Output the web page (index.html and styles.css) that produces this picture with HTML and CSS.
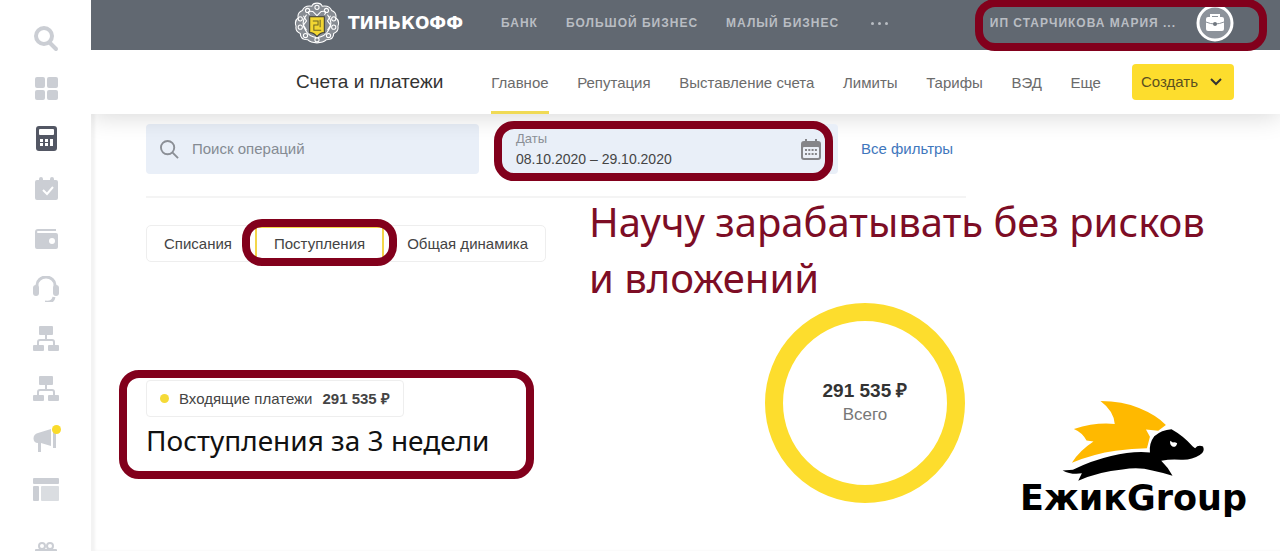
FILE: index.html
```
<!DOCTYPE html>
<html lang="ru">
	<head>
		<meta charset="UTF-8">
		<title>Счета и платежи</title>
		<link rel="stylesheet" href="styles.css">
	</head>
	<body>
		<!-- боковое меню -->
		<aside class="sidebar">
			<a href="#" aria-label="Поиск"><svg viewBox="0 0 26 26"><circle cx="11" cy="10" r="8" fill="none" stroke="currentColor" stroke-width="4"/><path d="M17 17l6 6" stroke="currentColor" stroke-width="4" stroke-linecap="round"/></svg></a>
			<a href="#" aria-label="Главная"><svg viewBox="0 0 26 26"><rect x="2" y="1" width="10" height="11" rx="2"/><rect x="14" y="1" width="11" height="11" rx="2"/><rect x="2" y="14" width="10" height="10" rx="2"/><rect x="14" y="14" width="11" height="10" rx="2"/></svg></a>
			<a href="#" class="active" aria-label="Счета"><svg viewBox="0 0 26 26"><rect x="3" y="0" width="21" height="25" rx="3"/><g fill="#fff"><rect x="6" y="3" width="15" height="6" rx="1"/><rect x="7" y="13" width="3" height="3"/><rect x="12" y="13" width="3" height="3"/><rect x="7" y="17" width="3" height="3"/><rect x="12" y="17" width="3" height="3"/><rect x="17" y="13" width="3" height="7"/></g></svg></a>
			<a href="#" aria-label="Календарь"><svg viewBox="0 0 26 26"><path d="M4 4h2V3a2 2 0 0 1 4 0v1h7V3a2 2 0 0 1 4 0v1h2a2 2 0 0 1 2 2v16a2 2 0 0 1-2 2H4a2 2 0 0 1-2-2V6a2 2 0 0 1 2-2z"/><path d="M10 14l4 4 6-7" fill="none" stroke="#fff" stroke-width="2"/></svg></a>
			<a href="#" aria-label="Кошелёк"><svg viewBox="0 0 26 26"><path d="M23 3H5a3 3 0 0 0-3 3v15a2 2 0 0 0 2 2h19a2 2 0 0 0 2-2V9a2 2 0 0 0-2-2H5a1 1 0 0 1 0-2h18z"/><circle cx="19" cy="15" r="3" fill="#fff"/></svg></a>
			<a href="#" aria-label="Поддержка"><svg viewBox="0 0 26 26"><path d="M4 13V9a9 8 0 0 1 18 0v4" fill="none" stroke="currentColor" stroke-width="3"/><rect x="0" y="9" width="6" height="11" rx="3"/><rect x="20" y="9" width="6" height="11" rx="3"/><path d="M12 26q8 1 9-5" fill="none" stroke="currentColor" stroke-width="3"/></svg></a>
			<a href="#" aria-label="Структура"><svg viewBox="0 0 26 26"><path d="M13 8v6M5 19v-3q0-2 2-2h12q2 0 2 2v3" fill="none" stroke="currentColor" stroke-width="2"/><rect x="6" y="0" width="14" height="9" rx="1"/><rect x="0" y="19" width="11" height="6" rx="1"/><rect x="15" y="19" width="11" height="6" rx="1"/></svg></a>
			<a href="#" aria-label="Партнёры"><svg viewBox="0 0 26 26"><path d="M13 8v6M5 19v-3q0-2 2-2h12q2 0 2 2v3" fill="none" stroke="currentColor" stroke-width="2"/><rect x="6" y="0" width="14" height="9" rx="1"/><rect x="0" y="19" width="11" height="6" rx="1"/><rect x="15" y="19" width="11" height="6" rx="1"/></svg></a>
			<a href="#" class="has-news" aria-label="Новости"><svg viewBox="0 0 26 26"><path d="M18 3v17L8 17v9H5v-9c-6 0-6-9 0-10z"/><rect x="20" y="4" width="3" height="18"/></svg></a>
			<a href="#" aria-label="Витрина"><svg viewBox="0 0 26 26"><rect x="0" y="2" width="26" height="6" rx="1"/><rect x="0" y="10" width="6" height="15" rx="1"/><rect x="8" y="10" width="18" height="15" rx="1" opacity=".7"/></svg></a>
			<a href="#" class="gift" aria-label="Подарки"><svg viewBox="0 0 26 26"><g fill="none" stroke="currentColor" stroke-width="2"><circle cx="9" cy="5" r="3"/><circle cx="17" cy="5" r="3"/></g><rect x="2" y="8" width="22" height="16" rx="1"/></svg></a>
		</aside>

		<div class="page">
			<!-- верхняя полоса -->
			<header class="topbar">
				<a href="#" class="logo">
					<svg viewBox="0 0 44 40">
						<path fill="#878c93" d="M22 1q4 0 5 3q7-1 9 4q5 2 4 7q4 3 2 8q1 5-4 7q0 6-7 6q-3 3-9 3q-6 0-9-3q-7 0-7-6q-5-2-4-7q-2-5 2-8q-1-5 4-7q2-5 9-4q1-3 5-3z"/>
						<g fill="none" stroke="#fff">
							<path d="M22 1q4 0 5 3q7-1 9 4q5 2 4 7q4 3 2 8q1 5-4 7q0 6-7 6q-3 3-9 3q-6 0-9-3q-7 0-7-6q-5-2-4-7q-2-5 2-8q-1-5 4-7q2-5 9-4q1-3 5-3z"/>
							<circle cx="22" cy="5" r="2"/><circle cx="13" cy="8" r="2"/><circle cx="31" cy="8" r="2"/><circle cx="6" cy="16" r="2"/><circle cx="38" cy="16" r="2"/><circle cx="6" cy="24" r="2"/><circle cx="38" cy="24" r="2"/><circle cx="11" cy="32" r="2"/><circle cx="33" cy="32" r="2"/><circle cx="22" cy="36" r="2"/>
							<path d="M12 12q-6 8-1 15q3 6 11 7q8-1 11-7q5-7-1-15M15 12q-4-4 3-3l4 4l4-4q7-1 3 3M9 13l3 5l-3 4l3 5M35 13l-3 5l3 4l-3 5"/>
						</g>
						<path d="M15 14h14v15q-4 0-7 4q-3-4-7-4z" fill="#f2d632" stroke="#3c3d38"/>
						<path d="M18 18h5v4h-4v5h7M25 17v7" fill="none" stroke="#6d6425"/>
					</svg>
					<span>ТИНЬКОФФ</span>
				</a>
				<nav class="top-nav">
					<a href="#">БАНК</a>
					<a href="#">БОЛЬШОЙ БИЗНЕС</a>
					<a href="#">МАЛЫЙ БИЗНЕС</a>
					<a href="#" class="dots" aria-label="Ещё"><i></i><i></i><i></i></a>
				</nav>
				<a href="#" class="user marked">
					<span>ИП СТАРЧИКОВА МАРИЯ ...</span>
					<svg viewBox="0 0 38 38"><circle cx="19" cy="19" r="17" fill="#8d939b" stroke="#fff" stroke-width="3"/><path d="M15 14v-3h8v3" fill="none" stroke="#fff" stroke-width="2"/><rect x="10" y="13" width="18" height="14" rx="2" fill="#fff"/><path d="M10 18q9 4 18 0" fill="none" stroke="#8d939b"/><circle cx="19" cy="20" r="2" fill="#70767f"/></svg>
				</a>
			</header>

			<!-- меню раздела -->
			<div class="subbar">
				<h1>Счета и платежи</h1>
				<nav class="sub-nav">
					<a href="#" class="current">Главное</a>
					<a href="#">Репутация</a>
					<a href="#">Выставление счета</a>
					<a href="#">Лимиты</a>
					<a href="#">Тарифы</a>
					<a href="#">ВЭД</a>
					<a href="#">Еще</a>
				</nav>
				<button type="button" class="create">Создать <svg viewBox="0 0 12 8"><path d="M1 1l5 5l5-5" fill="none" stroke="currentColor" stroke-width="2"/></svg></button>
			</div>

			<main>
				<form class="filters">
					<div class="field search">
						<svg viewBox="0 0 20 20"><circle cx="8" cy="8" r="7" fill="none" stroke="currentColor" stroke-width="2"/><path d="M13 13l6 6" stroke="currentColor" stroke-width="2"/></svg>
						<input type="text" placeholder="Поиск операций" aria-label="Поиск операций">
					</div>
					<div class="field dates marked">
						<div>
							<label for="dates">Даты</label>
							<input type="text" id="dates" value="08.10.2020 – 29.10.2020">
						</div>
						<svg viewBox="0 0 20 21"><path d="M3 2h1V0h2v2h8V0h2v2h1a3 3 0 0 1 3 3v13a3 3 0 0 1-3 3H3a3 3 0 0 1-3-3V5a3 3 0 0 1 3-3z"/><rect x="2" y="8" width="16" height="11" rx="1" fill="#ebeff7"/><path d="M4 11h12M4 15h12" stroke="currentColor" stroke-width="2" stroke-dasharray="2 1.3"/></svg>
					</div>
					<a href="#">Все фильтры</a>
				</form>

				<div class="content">
					<section class="left">
						<div class="tabs">
							<button type="button">Списания</button>
							<button type="button" class="on marked">Поступления</button>
							<button type="button">Общая динамика</button>
						</div>
						<div class="income marked">
							<div class="legend"><i></i><span>Входящие платежи</span><b>291 535 ₽</b></div>
							<p>Поступления за 3 недели</p>
						</div>
					</section>
					<section class="right">
						<p class="slogan">Научу зарабатывать без рисков<br>и вложений</p>
						<div class="bottom">
							<div class="donut"><b>291 535 ₽</b><span>Всего</span></div>
							<div class="brand">
								<svg viewBox="150 25 430 250">
									<path fill="#ffb900" d="M264 31Q330 31 380 52Q432 73 461 103L438 121L401 117L413 139L404 173Q360 173 310 181Q245 190 178 217Q200 181 243 153L222 150Q210 126 184 115Q250 94 307 100Q304 61 264 31z"/>
									<path d="M413 186Q410 158 426 137Q448 118 478 116Q514 136 542 168L549 173Q558 162 573 168Q580 184 563 194Q538 210 506 208Q477 205 447 211Q467 230 481 256Q450 246 420 240Q380 229 330 237Q260 243 197 271L208 249Q175 254 150 240L181 238Q240 210 296 197Q360 181 413 186z"/>
									<path fill="#fff" d="M474 151l8 5q6-2 13 2q-2 12-13 11q-10-4-8-18z"/>
								</svg>
								<span>ЕжикGroup</span>
							</div>
						</div>
					</section>
				</div>
			</main>
		</div>
	</body>
</html>
```
FILE: styles.css
```
* { margin:0; padding:0; box-sizing:border-box; }
body { display:flex; min-height:100vh; background:#fff; color:#444; font:15px/20px "Liberation Sans", Arial, sans-serif; overflow-x:hidden; }
a { color:inherit; text-decoration:none; }
button, input { font:inherit; color:inherit; border:0; background:none; }
svg { display:block; fill:currentColor; flex:none; }

/* боковое меню */
.sidebar { position:sticky; top:0; z-index:3; flex:none; width:91px; height:100vh; padding-top:14px; overflow:hidden; background:#fff; color:#cbced4; }
.sidebar a { display:flex; height:50px; align-items:center; justify-content:center; }
.sidebar svg { width:26px; height:26px; }
.sidebar .active { color:#535764; }
.sidebar .gift { padding-top:30px; }
.has-news { position:relative; }
.has-news::after { content:""; position:absolute; top:11px; right:30px; width:9px; height:9px; border-radius:50%; background:#fadb2b; }

.page { flex:1; min-width:0; box-shadow:inset 4px 0 3px #f3f3f3; }

/* красная рамка поверх элемента */
.marked { position:relative; }
.marked::after { content:""; position:absolute; z-index:2; border:8px solid #82001c; border-radius:20px; pointer-events:none; }

/* верхняя полоса */
.topbar { display:flex; align-items:center; height:50px; padding:0 46px 4px 203px; background:#616871; color:#b9bdc3; font-size:12px; font-weight:bold; letter-spacing:1px; }
.logo { display:flex; align-items:center; gap:8px; color:#fff; font:bold 17px/20px "DejaVu Sans", sans-serif; letter-spacing:0; }
.logo svg { width:46px; height:42px; }
.top-nav { display:flex; gap:28px; margin-left:38px; }
.dots { display:flex; align-items:center; gap:4px; margin-left:4px; }
.dots i { width:3px; height:3px; border-radius:50%; background:currentColor; }
.user { display:flex; align-items:center; gap:20px; margin-left:auto; }
.user svg { width:38px; height:38px; }
.user::after { inset:-5px -33px -9px -15px; }

/* меню раздела */
.subbar { position:relative; display:flex; align-items:center; height:64px; padding:0 46px 0 205px; background:#fff; box-shadow:0 2px 26px rgba(0,0,0,.16); clip-path:inset(0 0 -40px 0); }
.subbar h1 { font-size:19px; font-weight:normal; color:#333; }
.sub-nav { display:flex; flex:1; justify-content:space-between; align-self:stretch; margin:0 31px 0 48px; color:#6b6b6b; }
.sub-nav a { line-height:66px; }
.sub-nav .current { border-bottom:3px solid #f0da55; }
.create { display:flex; align-items:center; justify-content:space-between; width:102px; height:36px; padding:0 12px 0 9px; border-radius:4px; background:#fddd2d; color:#5b5020; font-size:15px; }
.create svg { width:12px; height:8px; color:#333; }

main { padding:10px 0 30px 55px; }
.filters { display:flex; align-items:center; max-width:820px; padding-bottom:22px; border-bottom:2px solid #f4f4f4; }
.field { display:flex; align-items:center; height:50px; border-radius:4px; background:#e9eff8; }
.field input { width:100%; outline:0; }
.search { flex:1; gap:13px; padding:0 14px; color:#8b8f96; }
.search svg { width:19px; height:19px; }
.search input::placeholder { color:#858b93; opacity:1; }
.dates { flex:1; justify-content:space-between; margin:0 23px 0 22px; padding:0 17px 0 15px; color:#444; }
.dates div { flex:1; padding-top:4px; }
.dates label { display:block; line-height:16px; font-size:13px; color:#8b8f96; }
.dates input { display:block; height:24px; font-size:14px; }
.dates svg { width:20px; height:21px; color:#858589; }
.dates::after { inset:-3px 5px -7px -7px; }
.filters > a { color:#3f77bd; width:105px; }

.content { display:flex; }
.left { flex:none; width:443px; padding-top:27px; }
.tabs { display:inline-flex; gap:6px; height:37px; border:1px solid #eee; border-radius:5px; }
.tabs button { padding:0 17px; }
.tabs .on { border:2px solid #f3d649; }
.tabs .on::after { inset:-9px -15px -7px -15px; }

.income { display:inline-block; margin-top:118px; }
.income::after { inset:-10px -45px -16px -27px; }
.legend { display:inline-flex; align-items:center; gap:10px; height:37px; padding:0 13px; border:1px solid #eee; border-radius:4px; }
.legend i { width:9px; height:9px; border-radius:50%; background:#f5da37; }
.income p { font:28px/46px "Noto Sans", "Open Sans", sans-serif; color:#111; white-space:nowrap; }

.right { flex:1; min-width:0; }
.slogan { margin-top:-4px; font:40px/56px "Noto Sans", "Open Sans", sans-serif; color:#7d0d25; white-space:nowrap; }
.bottom { display:flex; gap:55px; padding-left:176px; margin-top:-3px; }
.donut { display:flex; flex:none; flex-direction:column; align-items:center; justify-content:center; gap:4px; width:200px; height:200px; border:18px solid #fddd2d; border-radius:50%; font-size:17px; color:#777; }
.donut b { font-size:19px; color:#333; }
.brand { display:flex; flex-direction:column; align-items:center; padding-top:96px; color:#000; font:bold 35px/32px "DejaVu Sans", sans-serif; }
.brand svg { width:144px; height:83px; }
```
